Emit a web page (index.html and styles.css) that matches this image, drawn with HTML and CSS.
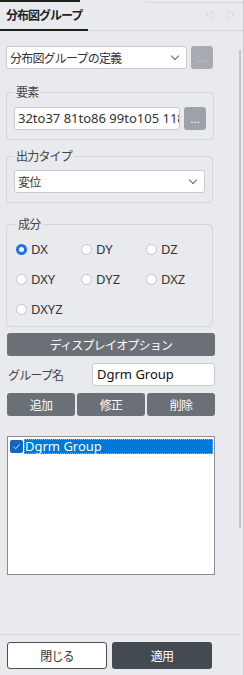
FILE: index.html
```html
<!DOCTYPE html>
<html lang="ja">
<head>
  <meta charset="UTF-8" />
  <title>分布図グループ</title>
  <link rel="stylesheet" href="styles.css">
</head>
<body>
  <div class="panel">
    <div class="tabs">
      <div class="tab">分布図グループ</div>
      <div class="tab-arrows"><span>&#9665;</span><span>&#9655;</span></div>
    </div>

    <div class="content">
      <div class="row top-row">
        <div class="select wide">分布図グループの定義<span class="chev"></span></div>
        <button class="dots light">...</button>
      </div>

      <fieldset class="group first">
        <legend>要素</legend>
        <div class="row">
          <div class="input clip"><span>32to37 81to86 99to105 118</span></div>
          <button class="dots">...</button>
        </div>
      </fieldset>

      <fieldset class="group second">
        <legend>出力タイプ</legend>
        <div class="select">変位<span class="chev"></span></div>
      </fieldset>

      <fieldset class="group comps">
        <legend>成分</legend>
        <div class="radios">
          <label class="radio on"><span class="dot"></span>DX</label>
          <label class="radio"><span class="dot"></span>DY</label>
          <label class="radio"><span class="dot"></span>DZ</label>
          <label class="radio"><span class="dot"></span>DXY</label>
          <label class="radio"><span class="dot"></span>DYZ</label>
          <label class="radio"><span class="dot"></span>DXZ</label>
          <label class="radio"><span class="dot"></span>DXYZ</label>
        </div>
      </fieldset>

      <button class="btn full">ディスプレイオプション</button>

      <div class="row name-row">
        <span class="name-label">グループ名</span>
        <div class="input name">Dgrm Group</div>
      </div>

      <div class="btn-row">
        <button class="btn">追加</button>
        <button class="btn">修正</button>
        <button class="btn">削除</button>
      </div>

      <div class="list">
        <div class="item">
          <span class="check"><svg width="9" height="9" viewBox="0 0 9 9"><path d="M1.5 4.8 L3.6 6.8 L7.5 2.4" fill="none" stroke="#cfe0f5" stroke-width="1"/></svg></span>
          <span class="item-text">Dgrm Group</span>
        </div>
      </div>
    </div>

    <div class="footer">
      <button class="fbtn close">閉じる</button>
      <button class="fbtn apply">適用</button>
    </div>

    <div class="scroll-thumb"></div>
  </div>
</body>
</html>
```

FILE: styles.css
```css
* {
  box-sizing: border-box;
}

html, body {
  margin: 0;
  height: 100%;
}

body {
  background: #e9eaee;
  font-family: "Noto Sans", "Noto Sans CJK JP", sans-serif;
  font-size: 12px;
  color: #333;
}

.panel {
  position: relative;
  width: 244px;
  height: 675px;
  border-right: 1px solid #c9cbcf;
  display: flex;
  flex-direction: column;
}

.tabs {
  height: 31px;
  display: flex;
  justify-content: space-between;
  border-bottom: 1px solid #d6d8dc;
  position: relative;
}

.tabs::before {
  content: "";
  position: absolute;
  left: 0;
  top: 0;
  width: 80px;
  height: 2px;
  background: #1e1e1e;
}

.tabs::after {
  content: "";
  position: absolute;
  left: 146px;
  right: 0;
  top: 2px;
  height: 1px;
  background: #d6d8dc;
}

.tab {
  width: 88px;
  padding: 6px 0 0 6px;
  font-family: "Noto Sans CJK JP", sans-serif;
  font-weight: bold;
  font-size: 12px;
  letter-spacing: -1px;
  color: #1e1e1e;
  border-bottom: 2px solid #1e1e1e;
  margin-bottom: -1px;
}

.tab-arrows {
  display: flex;
  gap: 12px;
  padding: 8px 8px 0 0;
  color: #c3c5c9;
  font-size: 9px;
}

.content {
  flex: 1;
  padding: 15px 0 0 6px;
  width: 216px;
}

.row {
  display: flex;
  gap: 4px;
}

.select, .input {
  height: 23px;
  background: #fff;
  border: 1px solid #c8cacf;
  border-radius: 3px;
  padding: 0 0 0 3px;
  line-height: 21px;
  font-family: "Noto Sans CJK JP", sans-serif;
  letter-spacing: -0.8px;
  color: #333;
  position: relative;
}

.select.wide {
  width: 181px;
}

.chev {
  position: absolute;
  right: 8px;
  top: 6px;
  width: 6px;
  height: 6px;
  border-right: 1.5px solid #666;
  border-bottom: 1.5px solid #666;
  transform: rotate(45deg);
}

.dots {
  width: 22px;
  height: 23px;
  border: none;
  border-radius: 3px;
  background: #9da1a8;
  color: #fff;
  font-size: 11px;
  padding: 0;
  line-height: 23px;
  font-family: "Noto Sans", sans-serif;
}

.dots.light {
  background: #a8acb2;
  color: #c5c8cc;
}

.group {
  width: 207px;
  border: 1px solid #d3d5d9;
  border-radius: 4px;
  padding: 8px 7px 9px 7px;
  margin: 0;
}

.group.first {
  margin-top: 16px;
}

.group.second {
  margin-top: 9px;
  padding-top: 7px;
}

.group legend {
  padding: 0 2px;
  margin-left: 0;
  font-family: "Noto Sans CJK JP", sans-serif;
  letter-spacing: -0.8px;
  color: #444;
  line-height: 14px;
}

.input.clip {
  width: 166px;
  overflow: hidden;
  white-space: nowrap;
  font-family: "Noto Sans", sans-serif;
  font-size: 13px;
  letter-spacing: 0;
  padding-left: 3px;
}

.group .select {
  width: 191px;
}

.comps {
  margin-top: 14px;
  padding: 9px 0 8px 9px;
}

.radios {
  display: grid;
  grid-template-columns: 65px 65px 65px;
  row-gap: 12px;
}

.radio {
  display: flex;
  align-items: center;
  gap: 4px;
  height: 18px;
  font-size: 13px;
  color: #333;
}

.dot {
  width: 11px;
  height: 11px;
  border-radius: 50%;
  border: 1px solid #c3c5c9;
  background: #fff;
}

.radio.on .dot {
  border: 3px solid #1a73e8;
}

.btn {
  height: 23px;
  border: none;
  border-radius: 3px;
  background: #6b6f76;
  color: #fff;
  font-family: "Noto Sans CJK JP", sans-serif;
  font-size: 12px;
  letter-spacing: -0.8px;
  padding: 0;
}

.btn.full {
  width: 208px;
  margin: 6px 0 0 1px;
  display: block;
}

.name-row {
  margin: 7px 0 0 2px;
  align-items: center;
  justify-content: space-between;
  width: 207px;
}

.name-label {
  font-family: "Noto Sans CJK JP", sans-serif;
  letter-spacing: -0.8px;
  color: #444;
}

.input.name {
  width: 123px;
  font-family: "Noto Sans", sans-serif;
  font-size: 13px;
  letter-spacing: 0;
  color: #111;
  padding-left: 4px;
}

.btn-row {
  margin: 7px 0 0 1px;
  display: grid;
  grid-template-columns: 68px 68px 68px;
  gap: 2px;
}

.list {
  margin: 20px 0 0 1px;
  width: 208px;
  height: 139px;
  background: #fff;
  border: 1px solid #8a8c90;
  padding: 2px 1px 0 2px;
}

.item {
  display: flex;
  align-items: center;
  gap: 1px;
  height: 15px;
}

.check {
  width: 13px;
  height: 13px;
  background: #1565c0;
  border-radius: 2px;
  display: flex;
  align-items: center;
  justify-content: center;
}

.item-text {
  flex: 1;
  height: 15px;
  background: #0078d7;
  color: #fff;
  outline: 1px dotted #e8a040;
  outline-offset: -1px;
  font-family: "Noto Sans", sans-serif;
  font-size: 13px;
  line-height: 14px;
  padding-left: 1px;
}

.footer {
  height: 41px;
  border-top: 1px solid #d3d5d9;
  width: 240px;
  display: flex;
  gap: 5px;
  padding: 7px 0 0 7px;
}

.fbtn {
  width: 100px;
  height: 27px;
  border-radius: 3px;
  font-family: "Noto Sans CJK JP", sans-serif;
  font-size: 12px;
  letter-spacing: -0.8px;
  padding: 0;
}

.fbtn.close {
  background: #fff;
  border: 1px solid #4a4e55;
  color: #333;
}

.fbtn.apply {
  background: #434a52;
  border: none;
  color: #fff;
}

.scroll-thumb {
  position: absolute;
  right: 2px;
  top: 50px;
  width: 2px;
  height: 478px;
  background: #c2c4c8;
}
```
